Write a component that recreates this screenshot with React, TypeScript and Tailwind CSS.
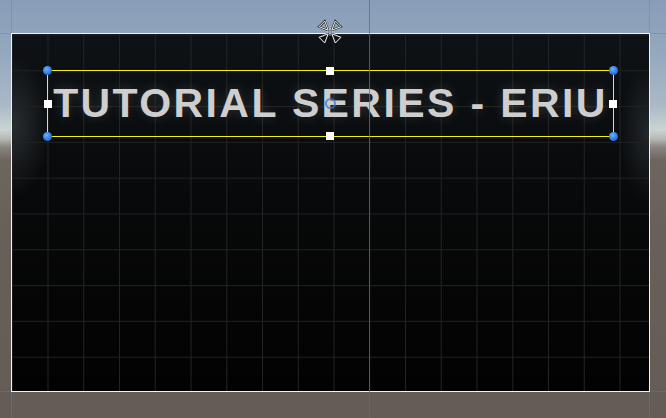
import React from "react";

// Unity-style scene view: a UI canvas with a selected TextMeshPro label

const Handle = ({ className }: { className: string }) => (
  <span
    className={`absolute w-[9px] h-[9px] rounded-full bg-[radial-gradient(circle_at_40%_35%,#6fb0ff,#2a74de_60%,#1d5bb8)] ${className}`}
  />
);

const Square = ({ className }: { className: string }) => (
  <span className={`absolute w-[8px] h-[8px] bg-white ${className}`} />
);

// scene gizmos: guide lines past the canvas edges + the directional light icon
const SceneGizmos = () => (
  <svg
    width="666"
    height="418"
    viewBox="0 0 666 418"
    className="absolute inset-0 pointer-events-none"
  >
    <g stroke="rgba(122,122,122,0.4)" strokeWidth="1" shapeRendering="crispEdges">
      <path d="M0 33.5 H11 M650 33.5 H666 M0 391.5 H11 M650 391.5 H666" />
      <path d="M11.5 0 V33 M11.5 392 V418 M649.5 0 V33 M649.5 392 V418" />
    </g>
    <path
      d="M369.5 0 V418"
      stroke="rgba(106,106,106,0.75)"
      strokeWidth="1"
      shapeRendering="crispEdges"
    />
    <g fill="none" transform="translate(316 18)">
      {[45, 135, 225, 315].map((a) => (
        <g key={a} transform={`rotate(${a} 14 14)`}>
          <path d="M14 11.5 L10 2.5 L18 2.5 Z" stroke="#1a1a1a" strokeWidth="2" />
          <path d="M14 11.5 L10 2.5 L18 2.5 Z" stroke="#ffffff" strokeWidth="0.9" />
        </g>
      ))}
      <path d="M14 10 V18 M10 14 H18" stroke="#ffffff" strokeWidth="0.8" opacity="0.7" />
    </g>
  </svg>
);

export default function App() {
  return (
    <div className="relative w-[666px] h-[418px] overflow-hidden font-['Liberation_Sans',Arial,sans-serif] bg-[linear-gradient(to_bottom,#889db8_0px,#93a7bd_50px,#aab9c7_105px,#cbd4d3_130px,#b4b8b5_139px,#8a8580_147px,#6d665f_160px,#676059_250px,#645d57_418px)]">
      {/* canvas */}
      <div className="pl-[11px] pt-[33px]">
        <div className="w-[639px] h-[359px] border border-[#f2f2f2] bg-[radial-gradient(ellipse_38px_70px_at_0%_26%,rgba(160,180,190,0.2),transparent),radial-gradient(ellipse_30px_70px_at_100%_28%,rgba(160,180,190,0.16),transparent),linear-gradient(to_bottom,#0e1216,#08090a_45%,#020202)]">
          <div className="w-full h-full pl-[35px] pt-[36px] bg-[linear-gradient(to_right,#232323_1px,transparent_1px),linear-gradient(to_bottom,#212121_1px,transparent_1px)] bg-[size:35.75px_35.8px] bg-[position:35.5px_0.5px]">
            <div className="relative w-[567px] h-[67px] border border-[#f4ee1a] flex items-center justify-center">
              <span className="text-[41px] leading-none font-bold tracking-[2.4px] text-[#cecece] whitespace-nowrap [text-shadow:0_0_12px_rgba(255,255,255,0.16)]">
                TUTORIAL SERIES - ERIU
              </span>
              <span className="absolute left-[277px] top-[27px] w-[11px] h-[11px] rounded-full border-2 border-[#3b78c6]/75" />
              <Handle className="-left-[5px] -top-[5px]" />
              <Handle className="-right-[5px] -top-[5px]" />
              <Handle className="-left-[5px] -bottom-[5px]" />
              <Handle className="-right-[5px] -bottom-[5px]" />
              <Square className="left-[278px] -top-[4px]" />
              <Square className="left-[278px] -bottom-[4px]" />
              <Square className="-left-[4px] top-[29px]" />
              <Square className="-right-[4px] top-[29px]" />
            </div>
          </div>
        </div>
      </div>

      <SceneGizmos />
    </div>
  );
}
